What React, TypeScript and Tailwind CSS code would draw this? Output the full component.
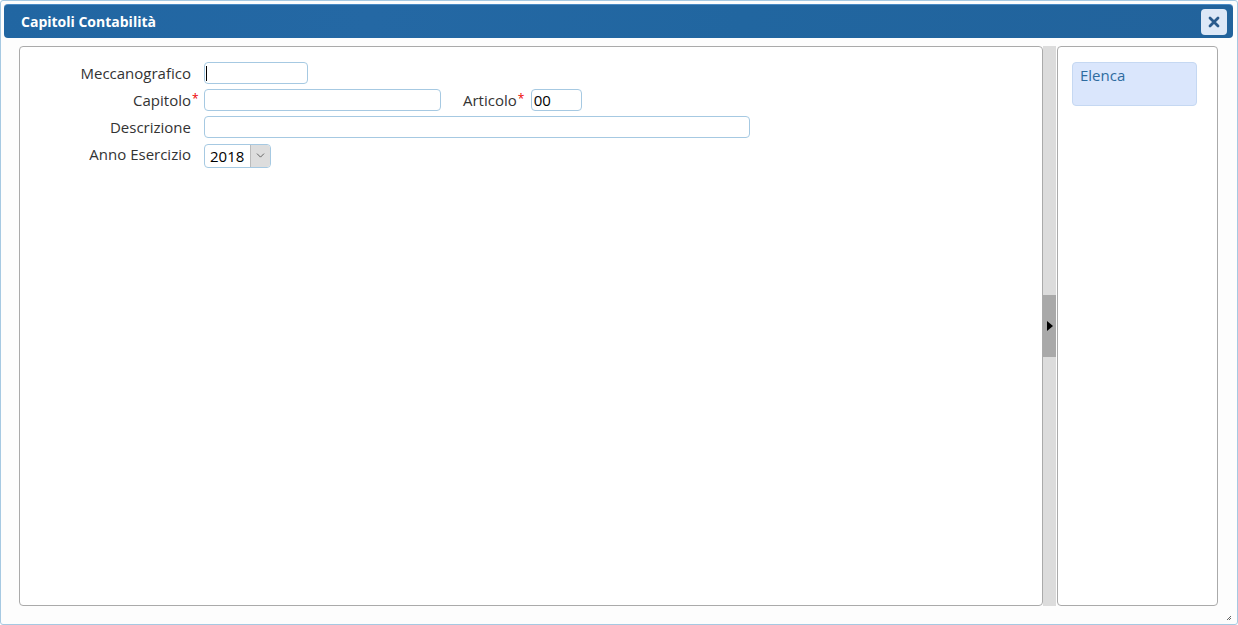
import { ChevronDown } from 'lucide-react';

const font = { fontFamily: '"Open Sans", "Noto Sans", sans-serif' };

function Label({ text, required, className = '' }: { text: string; required?: boolean; className?: string }) {
  return (
    <label className={`relative -mt-[1px] text-[15px] leading-[20px] text-[#333] ${className}`}>
      {text}
      {required && <span className="absolute left-full top-[-1px] ml-[1px] text-[12px] text-[#e00]">*</span>}
    </label>
  );
}

function Input({ width, value, focused }: { width: string; value?: string; focused?: boolean }) {
  return (
    <div className={`relative h-[22px] ${width} rounded-[4px] border border-[#a6c9e2] bg-white px-[2px] text-[15px] leading-[20px] text-black`}>
      {focused && <span className="absolute left-[1px] top-[3px] h-[15px] w-[1px] bg-black" />}
      {value}
    </div>
  );
}

export default function App() {
  return (
    <div style={font} className="flex h-[625px] w-[1238px] flex-col overflow-hidden rounded-[3px] border border-[#a6c9e2] bg-[#fdfdfd]">
      {/* title bar */}
      <div className="ml-[3px] mr-[4px] mt-[3px] flex h-[34px] items-center justify-between rounded-[4px] border-t border-[#4a8bc6] bg-[linear-gradient(100deg,#2166a2_0%,#2468a4_30%,#2166a0_60%,#22639c_100%)] pl-[17px] pr-[6px]">
        <span className="text-[14px] font-bold text-white">Capitoli Contabilità</span>
        <button className="flex h-[26px] w-[26px] items-center justify-center rounded-[4px] bg-[#dde8f7] text-[#2a5a8c]">
          <svg width="12" height="12" viewBox="0 0 12 12">
            <path d="M2 2 L10 10 M10 2 L2 10" stroke="#2a5a8c" strokeWidth="2.8" strokeLinecap="round" />
          </svg>
        </button>
      </div>

      {/* body */}
      <div className="flex flex-1 pb-[18px] pl-[18px] pr-[19px] pt-[8px]">
        {/* form panel */}
        <div className="w-[1024px] rounded-[4px] border border-[#aaa] bg-white pt-[15px]">
          <div className="grid grid-cols-[171px_auto] auto-rows-[22px] items-center gap-x-[13px] gap-y-[5px]">
            <Label text="Meccanografico" className="text-right" />
            <Input width="w-[104px]" focused />

            <div className="flex justify-end">
              <Label text="Capitolo" required />
            </div>
            <div className="flex items-center">
              <Input width="w-[237px]" />
              <div className="ml-[22px] mr-[14px]">
                <Label text="Articolo" required />
              </div>
              <Input width="w-[51px]" value="00" />
            </div>

            <Label text="Descrizione" className="text-right" />
            <Input width="w-[546px]" />

            <Label text="Anno Esercizio" className="text-right" />
            <div className="mt-[3px] flex h-[24px] w-[67px] items-stretch overflow-hidden rounded-[4px] border border-[#a6c9e2] bg-white">
              <span className="flex-1 pl-[5px] text-[15px] leading-[22px] text-black">2018</span>
              <span className="flex w-[20px] items-center justify-center border-l border-[#bbb] bg-[#ddd]">
                <ChevronDown size={13} strokeWidth={1.3} color="#333" />
              </span>
            </div>
          </div>
        </div>

        {/* splitter */}
        <div className="flex w-[13px] items-center bg-[#dcdcdc]">
          <div className="flex h-[62px] w-full items-center justify-center bg-[#a9a9a9]">
            <svg width="6" height="10" viewBox="0 0 6 10">
              <path d="M0 0 L6 5 L0 10 Z" fill="#000" />
            </svg>
          </div>
        </div>

        {/* actions panel */}
        <div className="ml-[1px] flex-1 rounded-[4px] border border-[#aaa] bg-white px-[14px] pt-[15px]">
          <button className="flex h-[44px] w-[125px] items-start rounded-[4px] border border-[#c5d8f2] bg-[#dae6fc] px-[7px] pt-[1px] text-left text-[15px] text-[#2e6ba0]">
            Elenca
          </button>
        </div>
      </div>

      {/* resize grip */}
      <div className="relative h-0">
        <svg className="absolute bottom-[3px] right-[5px]" width="6" height="6" viewBox="0 0 6 6">
          <path d="M5 1 L1 5 M5 3 L3 5" stroke="#666" strokeWidth="1" />
        </svg>
      </div>
    </div>
  );
}
